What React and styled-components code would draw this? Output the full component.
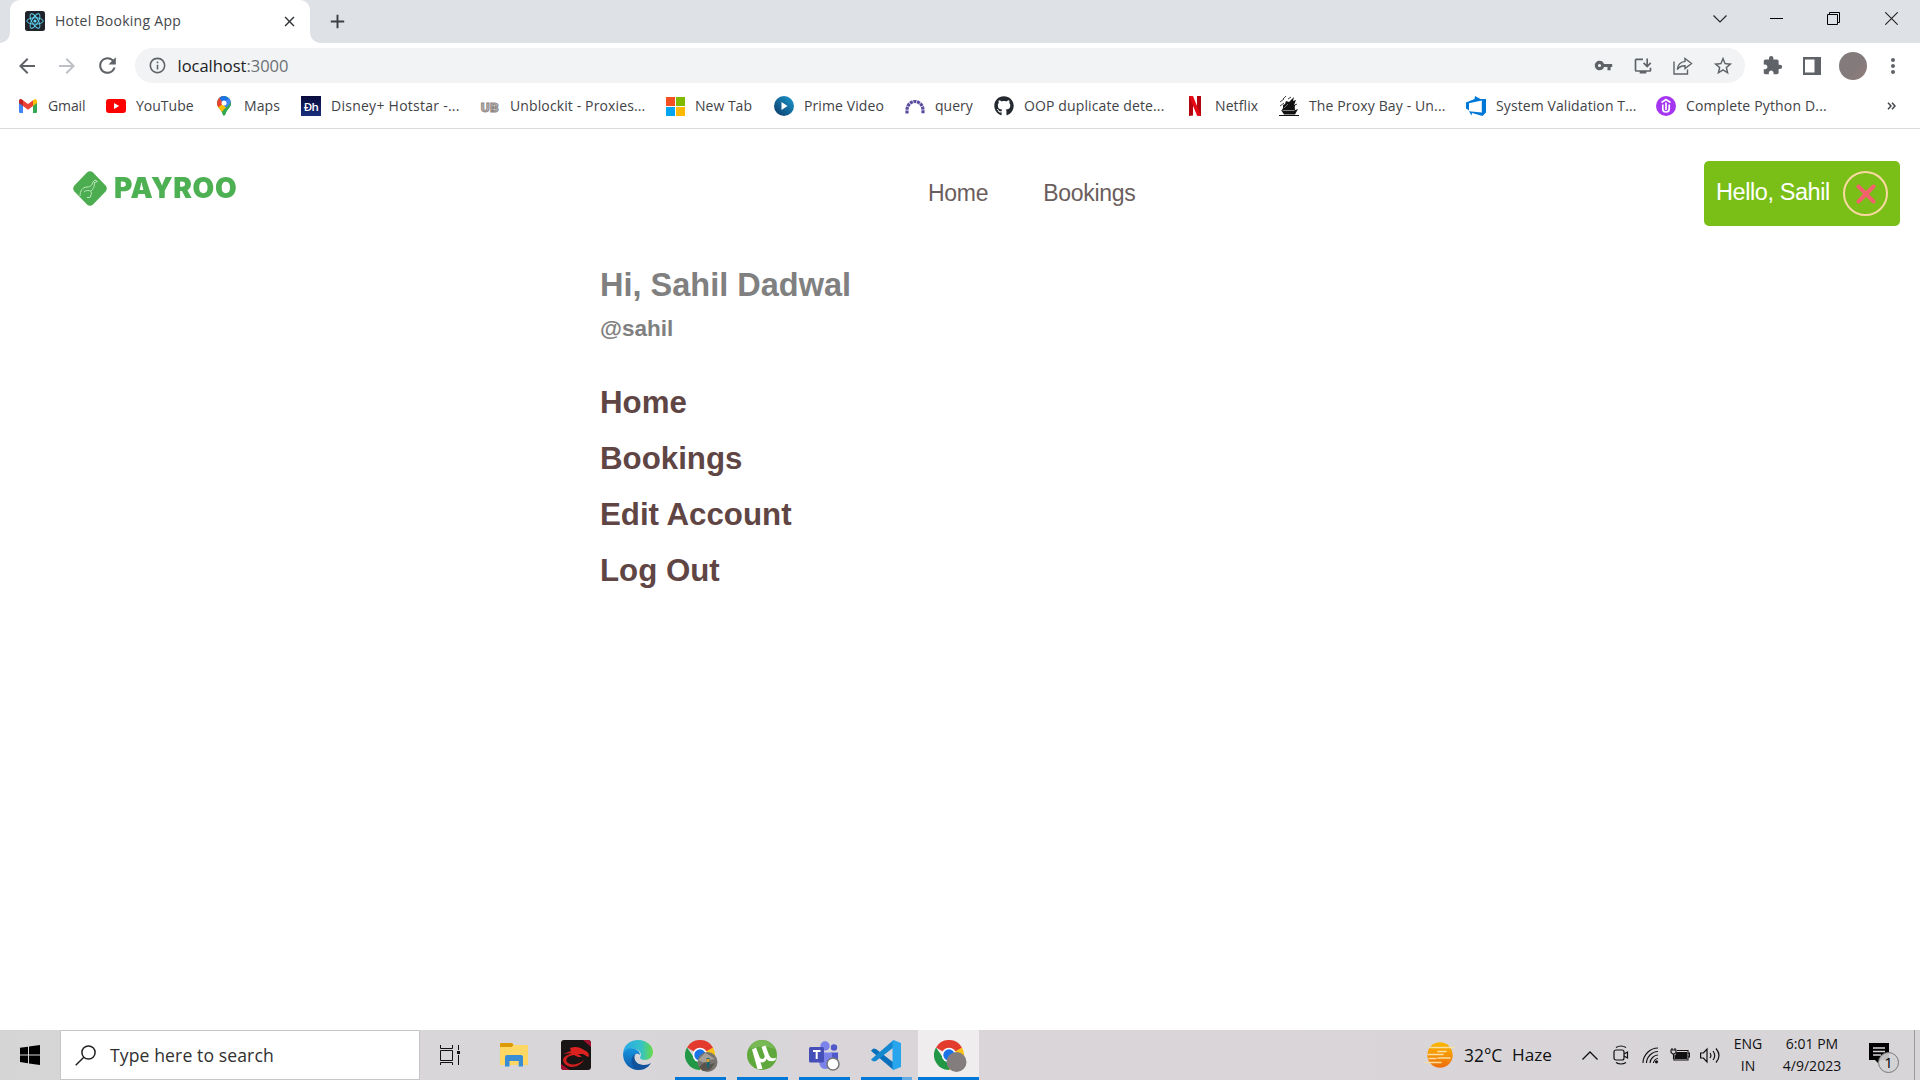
import React from "react";
import styled, { createGlobalStyle } from "styled-components";
import {
  MdArrowBack, MdArrowForward, MdRefresh, MdInfoOutline, MdVpnKey, MdInstallDesktop,
  MdStarBorder, MdExtension, MdMoreVert, MdClose, MdAdd,
} from "react-icons/md";
import { FaGithub } from "react-icons/fa";

const GlobalStyle = createGlobalStyle`
  * { box-sizing: border-box; }
  html, body { margin: 0; padding: 0; background: #fff; overflow: hidden; }
  svg { display: block; flex: none; }
  a { text-decoration: none; color: inherit; }
`;

const uiFont = `"Open Sans", "Noto Sans", sans-serif`;

const Screen = styled.div`
  width: 1920px;
  height: 1080px;
  display: flex;
  flex-direction: column;
  font-family: ${uiFont};
`;

/* ---------- browser chrome ---------- */

const TabStrip = styled.header`
  height: 43px;
  flex: none;
  display: flex;
  background: #dee1e6;
`;

const TabFoot = styled.div`
  width: 10px;
  height: 43px;
  background: radial-gradient(circle at ${(p) => (p.$side === "left" ? "0" : "10px")} 0, transparent 9.5px, #fff 10px)
    0 33px / 10px 10px no-repeat;
`;

const Tab = styled.div`
  width: 300px;
  height: 43px;
  padding: 0 12px 1px 15px;
  display: flex;
  align-items: center;
  border-radius: 10px 10px 0 0;
  background: #fff;
`;

const TabTitle = styled.span`
  margin-left: 10px;
  flex: 1;
  color: #45484c;
  font-size: 14px;
  line-height: 20px;
  letter-spacing: 0.28px;
`;

const NewTab = styled.button`
  width: 35px;
  border: 0;
  padding: 0 0 0 6px;
  background: none;
  color: #3c4043;
  display: flex;
  align-items: center;
`;

const WindowControls = styled.div`
  margin-left: auto;
  height: 37px;
  display: flex;
`;

const WindowButton = styled.div`
  width: ${(p) => p.$width || 57}px;
  display: flex;
  align-items: center;
  justify-content: center;
`;

const Toolbar = styled.div`
  height: 43px;
  flex: none;
  padding: 5px 7px 3px 7px;
  display: flex;
  align-items: center;
  background: #fff;
`;

const ToolButton = styled.div`
  width: ${(p) => p.$width || 40}px;
  height: 35px;
  display: flex;
  align-items: center;
  justify-content: center;
  color: ${(p) => (p.$muted ? "#bdc1c6" : "#5f6368")};
`;

const AddressBar = styled.div`
  width: 1610px;
  height: 35px;
  margin-left: 8px;
  margin-right: 7px;
  padding: 0 2px 0 13px;
  border-radius: 18px;
  background: #f1f3f4;
  display: flex;
  align-items: center;
  color: #5f6368;
`;

const Address = styled.span`
  flex: 1;
  margin-left: 10.5px;
  font-size: 16.5px;
  line-height: 24px;
  letter-spacing: -0.02px;
  color: #6c7074;
  b { font-weight: 400; color: #202124; }
`;

const Avatar = styled.div`
  width: 28px;
  height: 28px;
  border-radius: 50%;
  background: linear-gradient(135deg, #827b7c, #837a7b 55%, #937e7b);
`;

const BookmarkBar = styled.nav`
  height: 43px;
  flex: none;
  padding: 0 0 2px 18px;
  display: flex;
  align-items: center;
  border-bottom: 1px solid #d9dbdc;
`;

const Bookmark = styled.a`
  width: ${(p) => p.$width}px;
  height: 30px;
  display: flex;
  align-items: center;
  gap: 10px;
  color: #3f4347;
  font-size: 14px;
  white-space: nowrap;
  letter-spacing: ${(p) => p.$spacing || 0}px;
`;

const BookmarkLabel = styled.span`
  padding-bottom: 2px;
`;

const BookmarkIcon = styled.span`
  width: 20px;
  height: 20px;
  display: flex;
  align-items: center;
  justify-content: center;
`;

/* ---------- page ---------- */

const Page = styled.main`
  flex: 1;
  display: flex;
  flex-direction: column;
  font-family: "Liberation Sans", Arial, sans-serif;
`;

const SiteHeader = styled.header`
  height: 97px;
  padding: 32px 20px 0 73px;
  display: grid;
  grid-template-columns: 855px 1fr 196px;
  align-items: start;
`;

const Brand = styled.div`
  height: 54px;
  display: flex;
  align-items: center;
  gap: 7px;
  filter: blur(0.45px);
`;

const BrandName = styled.span`
  font: 900 28px/34px Inter, sans-serif;
  letter-spacing: 0.6px;
  color: #4db053;
`;

const SiteNav = styled.nav`
  height: 65px;
  display: flex;
  align-items: center;
  gap: 55px;
  font-size: 23px;
  color: #6b5d5d;
`;

const NavLink = styled.a`
  letter-spacing: -0.3px;
`;

const UserButton = styled.button`
  height: 65px;
  border: 0;
  border-radius: 5px;
  padding: 0 12px;
  display: flex;
  align-items: center;
  justify-content: space-between;
  background: #7abf18;
  color: #fff;
  font: 23.5px/27px "Liberation Sans", Arial, sans-serif;
  letter-spacing: -0.42px;
  white-space: nowrap;
`;

const UserName = styled.span`
  padding-bottom: 2px;
`;

const CloseRing = styled.span`
  width: 45px;
  height: 45px;
  border: 2px solid #fbd9a0;
  border-radius: 50%;
  display: flex;
  align-items: center;
  justify-content: center;
`;

const Profile = styled.section`
  padding: 39px 0 0 600px;
`;

const Greeting = styled.h1`
  margin: 0;
  font-size: 32.5px;
  line-height: 40px;
  color: #808080;
`;

const Handle = styled.h2`
  margin: 4px 0 0;
  font-size: 22.5px;
  line-height: 40px;
  color: #808080;
`;

const Menu = styled.ul`
  list-style: none;
  margin: 26px 0 0;
  padding: 0;
`;

const MenuItem = styled.li`
  height: 56px;
  font-size: 31.25px;
  line-height: 56px;
  font-weight: 700;
  color: #5f4544;
`;

/* ---------- taskbar ---------- */

const Taskbar = styled.footer`
  height: 50px;
  flex: none;
  display: flex;
  background: linear-gradient(90deg, #d5d5d6 0, #d8d6d8 420px, #d9d5d9 1000px, #d8d5d9 100%);
`;

const StartButton = styled.div`
  width: 60px;
  display: flex;
  align-items: center;
  justify-content: center;
`;

const SearchBox = styled.div`
  width: 360px;
  padding-left: 14px;
  border: 1px solid #c6c6c8;
  display: flex;
  align-items: center;
  gap: 14px;
  background: #fff;
  color: #303030;
  font-size: 17.6px;
  letter-spacing: 0.1px;
`;

const TaskViewSlot = styled.div`
  width: 63px;
  padding-left: 20px;
  display: flex;
  align-items: center;
`;

const TaskSlot = styled.div`
  width: ${(p) => (p.$active ? 61 : 62)}px;
  margin-left: ${(p) => (p.$active ? 1 : 0)}px;
  padding-top: 3px;
  display: flex;
  flex-direction: column;
  align-items: center;
  justify-content: space-between;
  background: ${(p) => (p.$active ? "#efedee" : "transparent")};
`;

const TaskIcon = styled.span`
  height: 44px;
  padding-left: ${(p) => p.$overhang || 0}px;
  padding-top: ${(p) => p.$overhang || 0}px;
  display: flex;
  align-items: center;
`;

const Underline = styled.span`
  width: ${(p) => (p.$full ? 61 : 51)}px;
  height: 3px;
  margin-left: ${(p) => (p.$full ? 0 : 1)}px;
  background: ${(p) => (p.$split ? "linear-gradient(90deg, #0078d7 41px, #62abe2 41px)" : "#0078d7")};
`;

const Tray = styled.div`
  margin-left: auto;
  display: flex;
  align-items: center;
  color: #111;
`;

const TraySlot = styled.div`
  width: ${(p) => p.$width}px;
  padding-top: ${(p) => p.$drop || 0}px;
  padding-left: ${(p) => p.$inset || 0}px;
  display: flex;
  align-items: center;
  justify-content: ${(p) => (p.$start ? "flex-start" : "center")};
`;

const TrayText = styled.div`
  width: ${(p) => p.$width}px;
  font-size: ${(p) => p.$size || 14}px;
  line-height: 22.5px;
  text-align: ${(p) => p.$align || "center"};
  white-space: nowrap;
`;

const DesktopEdge = styled.div`
  width: 6px;
  height: 50px;
  border-left: 1px solid #9b999c;
`;

/* ---------- icons ---------- */

const ReactBadge = () => (
  <svg width="20" height="20" viewBox="0 0 20 20">
    <rect width="20" height="20" rx="2.5" fill="#20232a" />
    <g fill="none" stroke="#61dafb" strokeWidth=".9">
      <ellipse cx="10" cy="10" rx="8.2" ry="3.2" />
      <ellipse cx="10" cy="10" rx="8.2" ry="3.2" transform="rotate(60 10 10)" />
      <ellipse cx="10" cy="10" rx="8.2" ry="3.2" transform="rotate(120 10 10)" />
    </g>
    <circle cx="10" cy="10" r="1.6" fill="#61dafb" />
  </svg>
);

const GmailIcon = () => (
  <svg width="18" height="14" viewBox="0 0 18 14">
    <path d="M0 3v9.8Q0 14 1.2 14H4V6z" fill="#4285f4" />
    <path d="M18 3v9.8q0 1.2-1.2 1.2H14V6z" fill="#34a853" />
    <path d="M14 1.2V7l4-3V2c0-1.8-1.7-2.2-2.8-1.6z" fill="#fbbc04" />
    <path d="M0 2v2l4 3V1.2L2.8.4C1.7-.3 0 .3 0 2z" fill="#c5221f" />
    <path d="M4 1.2V7l5 3.7L14 7V1.2L9 5z" fill="#ea4335" />
  </svg>
);

const YouTubeIcon = () => (
  <svg width="20" height="14" viewBox="0 0 20 14">
    <rect width="20" height="14" rx="3" fill="#f00" />
    <path d="M8 4v6l5.2-3z" fill="#fff" />
  </svg>
);

const MapsIcon = () => (
  <svg width="14" height="20" viewBox="0 0 14 20">
    <clipPath id="pin"><path d="M7 0a7 7 0 0 1 7 7c0 4-3.400 6-5 9.400-.7 1.500-.9 3.400-2 3.400s-1.300-1.900-2-3.400C3.400 13 0 11 0 7a7 7 0 0 1 7-7z" /></clipPath>
    <g clipPath="url(#pin)">
      <path d="M0 0h14v20H0z" fill="#34a853" />
      <path d="M0 11l6-6 5 4-8 9z" fill="#fbbc04" />
      <path d="M0 0h7L7 7-1 13z" fill="#ea4335" />
      <path d="M2 1L7-1l6 4-6 6z" fill="#1a73e8" />
      <path d="M12 2l3 3v6H8L6 7z" fill="#4285f4" />
      <path d="M14 6v7l-6 6-3-2z" fill="#34a853" />
    </g>
    <circle cx="7" cy="7" r="2.500" fill="#fff" />
  </svg>
);

const HotstarText = styled.span`
  width: 20px;
  height: 20px;
  background: linear-gradient(#080b3b, #1a2f7c);
  color: #fff;
  font: 600 11.5px/21px "Open Sans", sans-serif;
  letter-spacing: -0.7px;
  text-align: center;
`;

const UnblockText = styled.span`
  padding-top: 1px;
  font: 900 13.5px/16px Roboto, sans-serif;
  letter-spacing: 0.3px;
  color: #b8b0ad;
  -webkit-text-stroke: 0.9px #8d8583;
`;

const MicrosoftIcon = () => (
  <svg width="19" height="19" viewBox="0 0 19 19">
    <path d="M0 0h9v9H0z" fill="#f25022" /><path d="M10 0h9v9h-9z" fill="#7fba00" />
    <path d="M0 10h9v9H0z" fill="#00a4ef" /><path d="M10 10h9v9h-9z" fill="#ffb900" />
  </svg>
);

const PrimeIcon = () => (
  <svg width="20" height="20" viewBox="0 0 20 20">
    <defs><linearGradient id="prime" x1="1" y1="0" x2="0" y2="1"><stop stopColor="#1b9ad0" /><stop offset="1" stopColor="#0b3966" /></linearGradient></defs>
    <circle cx="10" cy="10" r="10" fill="url(#prime)" /><path d="M7.500 6v8l6-4z" fill="#fff" />
  </svg>
);

const QueryIcon = () => (
  <svg width="20" height="15" viewBox="0 0 20 15">
    <path d="M2 14.500V11a8 8.500 0 0 1 16 0v3.500" fill="none" stroke="#5b4b9e" strokeWidth="3.200" strokeDasharray="3 .7" />
  </svg>
);

const NetflixIcon = () => (
  <svg width="12" height="20" viewBox="0 0 12 20">
    <path d="M0 0h4v19.500L0 20zM8 0h4v20l-4-.5z" fill="#b1060f" /><path d="M0 0h4l8 20-4-.5z" fill="#e50914" />
  </svg>
);

const ShipIcon = () => (
  <svg width="20" height="20" viewBox="0 0 20 20" fill="#111">
    <path d="M0 19h20v1H0z" /><path d="M2 14l3 .5h10l4-1.500-3 5.500H5z" />
    <path d="M3 14l1-2 0-3 2-1 1-3 3 1 5-5-1 4 3-1-2 5 2-1c-2 2-1 4-1 6z" />
    <path d="M1 6l4-3M1 10l4-3M4 3l3-3M9 3l3-2M16 9l2-1" stroke="#111" strokeWidth=".8" />
    <path d="M5 12l4-4" stroke="#fff" strokeWidth=".4" />
  </svg>
);

const DevOpsIcon = () => (
  <svg width="20" height="20" viewBox="0 0 20 20">
    <path d="M0 6.500L8.500 3 9 0l5.500 3L20 3V16.500L16.500 20 6 17 5.500 19.500 3 15.200 15.800 16.400V4.500L3 7.200v7.200L0 12.400z" fill="#0078d7" />
  </svg>
);

const UdemyIcon = () => (
  <svg width="20" height="20" viewBox="0 0 20 20">
    <circle cx="10" cy="10" r="10" fill="#a435f0" />
    <path d="M5.500 6.500L10 3.500 14.500 6.500M6.800 8.500V13c0 4 6.400 4 6.400 0V8.500M10 6.500V14" fill="none" stroke="#fff" strokeWidth="1.700" />
  </svg>
);

const ShareIcon = () => (
  <svg width="20" height="20" viewBox="0 0 20 20" fill="none" stroke="#5f6368" strokeWidth="1.400">
    <path d="M1 5.500v12.500h13.500v-4.500" /><path d="M12 2.500L18.500 7.500 12 12.500V9.700C8.500 9.700 6 10.600 4.300 13.600 4.700 9.500 7.500 6 12 5.400z" />
  </svg>
);

const SidePanelIcon = () => (
  <svg width="18" height="18" viewBox="0 0 18 18"><path fillRule="evenodd" d="M0 0h18v18H0zM2 2.500v13h9.500v-13z" fill="#5f6368" /></svg>
);

const KangarooLogo = () => (
  <svg width="34" height="35" viewBox="0 0 34 35">
    <path d="M14 1.400q3-2.400 6 0L32.600 14.500q2.400 3 0 6L20 33.500q-3 2.400-6 0L1.400 20.500q-2.400-3 0-6z" fill="#4bad50" />
    <path d="M7 25c0-5 2.500-9 7-9 4 0 5-2 6-5l2-2 2.500 1.500-3 1c0 4-1 6.500-3.500 8.500M11 21c2-2 5-2 7-.5l.5 2-1.500 4h-3" fill="none" stroke="#bfe6be" strokeWidth="1" />
  </svg>
);

const WindowsIcon = () => (
  <svg width="20" height="20" viewBox="0 0 20 20"><path d="M0 2.800l8-1.100v7.700H0zM9 1.500L20 0v9.400H9zM0 10.400h8v7.800l-8-1.100zM9 10.400h11V20L9 18.400z" fill="#000" /></svg>
);

const SearchIcon = () => (
  <svg width="21" height="21" viewBox="0 0 21 21" fill="none" stroke="#222" strokeWidth="1.500"><circle cx="13.500" cy="7.500" r="6.600" /><path d="M8.800 12.200L.7 20.300" /></svg>
);

const TaskViewIcon = () => (
  <svg width="20" height="20" viewBox="0 0 20 20" fill="none" stroke="#111" strokeWidth="1">
    <path d="M.5 0v3.500h12V0M.5 5.500h12v10H.5zM.5 20v-2.500h12V20M18.500 0v5M18.500 10v10" /><path d="M17 6h3v3h-3z" fill="#111" stroke="none" />
  </svg>
);

const ExplorerIcon = () => (
  <svg width="28" height="24" viewBox="0 0 28 24">
    <path d="M0 0h12l2 2h14v20H0z" fill="#ffd45f" /><path d="M0 1q0-1 1-1h11l1.500 2L12 4H0z" fill="#dc9a08" />
    <path d="M1 4h11l2-2h13.500v19H1z" fill="#ffd765" /><path d="M5 23.500V14q0-2 2-2h14q2 0 2 2v9.500h-4.300V18H9.500v5.500z" fill="#388dd5" />
  </svg>
);

const DragonIcon = () => (
  <svg width="30" height="30" viewBox="0 0 30 30">
    <rect width="30" height="30" rx="3" fill="#191515" /><path d="M22 0h5q3 0 3 4v3zM0 24v3q0 3 3 3h6z" fill="#a4102d" />
    <path d="M9 8c5-2 10-1 14 2 3 1 5 3 5 6l-1 1-5-3-5 0 4 3-4 0-4-2-8 1 6-3-9 1 8-3z" fill="#dc2220" />
    <path d="M3 23C0 18 5 14 12 15c-5 1-8 4-6 7 3 4 11 3 17-2-4 7-15 10-20 3z" fill="#cf1f1e" />
  </svg>
);

const EdgeIcon = () => (
  <svg width="30" height="30" viewBox="0 0 30 30">
    <defs>
      <linearGradient id="eg1"><stop stopColor="#2aa8e7" /><stop offset=".6" stopColor="#35c1c9" /><stop offset="1" stopColor="#68dc45" /></linearGradient>
      <linearGradient id="eg2" x1="0" y1="0" x2="0" y2="1"><stop stopColor="#1695df" /><stop offset="1" stopColor="#0d57a7" /></linearGradient>
    </defs>
    <path d="M0 13C1 5 7 0 15 0c9 0 15 6 15 12 0 5-4 8-8 8-3 0-5-1-5-2.500C19 15 18 10 12 9 7 8 2 9 0 13z" fill="url(#eg1)" />
    <path d="M0 14C1 9 7 7 12 9c3 1 5 3 5 6-3-3-7 0-7 5 0 4 3 8 7 9.800C8 31 0 24 0 14z" fill="url(#eg2)" />
    <path d="M12 14c-2 6 2 11 9 11 3 0 5-1 7-2-3 5-8 7.500-13 6.800C8 27 6 19 12 14z" fill="#10529b" />
  </svg>
);

const ChromeIcon = ({ children }) => (
  <svg width="33" height="33" viewBox="0 0 33 33">
    <path d="M15 15L2 7.500A15 15 0 0 1 28 7.500z" fill="#e33b2e" />
    <path d="M15 15h-.5L28 7.500A15 15 0 0 1 15 30z" fill="#fbc116" />
    <path d="M2 7.500L10 19l5 3 2 1-2 7A15 15 0 0 1 2 7.500z" fill="#229745" />
    <path d="M15 7.500h13l-13 7z" fill="#e33b2e" />
    <circle cx="15" cy="15" r="7.300" fill="#fff" /><circle cx="15" cy="15" r="5.700" fill="#1a73e8" />{children}
  </svg>
);

const PhotoBadge = () => (
  <g><circle cx="22.500" cy="22" r="10" fill="#77736e" /><path d="M13 20l7-7 4 2 6 4-6 1-4 3z" fill="#a5a09a" /><path d="M14 27l6-5 3 3 7-2-5 7-7 1z" fill="#59534e" /><path d="M21.500 18h3l.5 5-1 5h-2z" fill="#1f6470" /><path d="M21.500 19h3v3h-3z" fill="#e0a32b" /></g>
);

const TorrentIcon = () => (
  <svg width="30" height="30" viewBox="0 0 30 30">
    <circle cx="15" cy="15" r="15" fill="#5fa83b" /><path d="M2 9a14 14 0 0 1 26 0q-13-5-26 0z" fill="#78b956" />
    <path d="M5 9.500l4-2 3.500 9.500c1.500 3.500 6 2 5-1.500L14.500 7l4-1.500L22 15c1 2.500 3 4 6 3l1-.5-.5 2.500c-3 2-7 1.500-9-1-1 3-4 4-6 3l2 7h-5z" fill="#fff" />
  </svg>
);

const TeamsIcon = () => (
  <svg width="31" height="31" viewBox="0 0 31 31">
    <circle cx="16" cy="6" r="4.700" fill="#7b83eb" /><circle cx="25" cy="7.500" r="3.200" fill="#5059c9" />
    <path d="M22 12.500h7v9q-1 5-7 4z" fill="#5059c9" /><path d="M10 12.500h13V23q-2 6-7 6t-6-7z" fill="#7b83eb" />
    <rect y="7" width="15" height="15.500" rx="1.500" fill="#464eb8" /><path d="M4 11h7.500M7.700 11v8" stroke="#fff" strokeWidth="2" />
    <circle cx="24" cy="24" r="6" fill="#fff" stroke="#777" strokeWidth="1.500" />
  </svg>
);

const CodeIcon = () => (
  <svg width="30" height="30" viewBox="0 0 30 30">
    <path d="M0 10.500l2.500-2L5 9l17.500 13.500V30L1 11.800z" fill="#0a70bb" /><path d="M0 19.500L22.500 0v7.500L5 21l-2.500.5L.5 20z" fill="#1688d0" />
    <path d="M22.500 0L30 3v24l-7.500 3-1-1V1z" fill="#29a5ee" />
  </svg>
);

const HazeIcon = () => (
  <svg width="30" height="27" viewBox="0 0 30 27">
    <defs><linearGradient id="sun" x1="0" y1="0" x2="0" y2="1"><stop stopColor="#fbb900" /><stop offset="1" stopColor="#ef6c0b" /></linearGradient></defs>
    <circle cx="15" cy="13" r="12.700" fill="url(#sun)" />
    <path d="M5 5.500h24M13 9.500h8M3 12.500h15M13 16h12M1 20.500h15M4 16.500h7" stroke="#f8dfa5" strokeWidth="1.600" strokeLinecap="round" />
  </svg>
);

const MeetIcon = () => (
  <svg width="16" height="20" viewBox="0 0 16 20" fill="none" stroke="#111" strokeWidth="1.200"><rect x="1" y="5" width="10" height="10" rx="2" /><path d="M11 9l3.500-2v6L11 11M3 2.500q5-3 10 0M3 17.500q5 3 10 0" /></svg>
);

const WifiIcon = () => (
  <svg width="17" height="17" viewBox="0 0 17 17" fill="none" stroke="#111" strokeWidth="1.100"><path d="M1 16C1 8 8 1 16 1M4.500 16C4.500 10 10 4.500 16 4.500M8 16c0-4 4-8 8-8M11.500 16c0-2 2-4.500 4.500-4.500" /><circle cx="14.500" cy="14.800" r="1.600" fill="#111" stroke="none" /></svg>
);

const BatteryIcon = () => (
  <svg width="20" height="14" viewBox="0 0 20 14" fill="none" stroke="#111" strokeWidth="1.100"><path d="M7 2.500h11V12H4V7M18 5h1.500v4H18" /><path d="M7 4.500h9.500v6H5.500V8z" fill="#111" /><path d="M1 2h5v2.500L3.500 6.500 1 4.500zM2 0v2M5 0v2M3.500 6v5" /></svg>
);

const VolumeIcon = () => (
  <svg width="21" height="17" viewBox="0 0 21 17" fill="none" stroke="#111" strokeWidth="1.200"><path d="M.6 6h2.800L7 2v13l-3.600-4H.6zM10 6q1.800 2.500 0 5M13 4q3.500 4.500 0 9M16 1.500q6 7 0 14" /></svg>
);

const NoticeIcon = () => (
  <svg width="32" height="32" viewBox="0 0 32 32">
    <path d="M1 2h20v17H13l-3 3-3-3H1z" fill="#000" /><path d="M5 7h12M5 10.500h12M5 14h8" stroke="#d8d5d9" strokeWidth="1.300" />
    <circle cx="20.500" cy="21.500" r="10" fill="#d3d1d4" fillOpacity=".9" stroke="#777" />
    <text x="20.500" y="27" textAnchor="middle" fontFamily="Open Sans, sans-serif" fontSize="15" fill="#000">1</text>
  </svg>
);

const bookmarks = [
  { label: "Gmail", icon: <GmailIcon />, width: 88, spacing: -0.1 },
  { label: "YouTube", icon: <YouTubeIcon />, width: 108 },
  { label: "Maps", icon: <MapsIcon />, width: 87, spacing: 0.1 },
  { label: "Disney+ Hotstar -...", icon: <HotstarText>Ðh</HotstarText>, width: 179, spacing: 0.26 },
  { label: "Unblockit - Proxies...", icon: <UnblockText>UB</UnblockText>, width: 185, spacing: 0.12 },
  { label: "New Tab", icon: <MicrosoftIcon />, width: 109 },
  { label: "Prime Video", icon: <PrimeIcon />, width: 131, spacing: 0.1 },
  { label: "query", icon: <QueryIcon />, width: 89 },
  { label: "OOP duplicate dete...", icon: <FaGithub size={20} color="#24292f" />, width: 191, spacing: 0.12 },
  { label: "Netflix", icon: <NetflixIcon />, width: 94, spacing: 0.1 },
  { label: "The Proxy Bay - Un...", icon: <ShipIcon />, width: 187, spacing: 0.13 },
  { label: "System Validation T...", icon: <DevOpsIcon />, width: 190, spacing: 0.1 },
  { label: "Complete Python D...", icon: <UdemyIcon />, width: 215, spacing: 0.17 },
];

const tasks = [
  { icon: <ExplorerIcon /> },
  { icon: <DragonIcon /> },
  { icon: <EdgeIcon /> },
  { icon: <ChromeIcon><PhotoBadge /></ChromeIcon>, running: true, overhang: 3 },
  { icon: <TorrentIcon />, running: true },
  { icon: <TeamsIcon />, running: true, overhang: 1 },
  { icon: <CodeIcon />, running: true, split: true },
  { icon: <ChromeIcon><circle cx="22.500" cy="22" r="10" fill="#837d7d" /></ChromeIcon>, running: true, active: true, overhang: 3 },
];

export default function App() {
  return (
    <Screen>
      <GlobalStyle />
      <TabStrip>
        <TabFoot $side="left" />
        <Tab>
          <ReactBadge />
          <TabTitle>Hotel Booking App</TabTitle>
          <MdClose size={17} color="#303336" />
        </Tab>
        <TabFoot $side="right" />
        <NewTab><MdAdd size={23} /></NewTab>
        <WindowControls>
          <WindowButton><svg width="14" height="8" viewBox="0 0 14 8"><path d="M.5.5L7 7 13.500.5" fill="none" stroke="#222" strokeWidth="1.100" /></svg></WindowButton>
          <WindowButton><svg width="13" height="1"><path d="M0 .5h13" stroke="#000" /></svg></WindowButton>
          <WindowButton><svg width="13" height="13" viewBox="0 0 13 13"><path d="M.5 2.500h10v10H.5zM2.500 2.500v-2h10v10h-2" fill="none" stroke="#000" /></svg></WindowButton>
          <WindowButton $width={58}><svg width="13" height="13" viewBox="0 0 13 13"><path d="M.3.3l12.400 12.400M12.700.3L.3 12.700" stroke="#222" strokeWidth="1.100" /></svg></WindowButton>
        </WindowControls>
      </TabStrip>

      <Toolbar>
        <ToolButton><MdArrowBack size={24} /></ToolButton>
        <ToolButton $muted><MdArrowForward size={24} /></ToolButton>
        <ToolButton><MdRefresh size={25} /></ToolButton>
        <AddressBar>
          <MdInfoOutline size={19} />
          <Address><b>localhost</b>:3000</Address>
          <ToolButton $width={39}><MdVpnKey size={19} /></ToolButton>
          <ToolButton><MdInstallDesktop size={20} /></ToolButton>
          <ToolButton><ShareIcon /></ToolButton>
          <ToolButton><MdStarBorder size={22} /></ToolButton>
        </AddressBar>
        <ToolButton><MdExtension size={21} /></ToolButton>
        <ToolButton><SidePanelIcon /></ToolButton>
        <ToolButton $width={41}><Avatar /></ToolButton>
        <ToolButton $width={39}><MdMoreVert size={24} /></ToolButton>
      </Toolbar>

      <BookmarkBar>
        {bookmarks.map((b) => (
          <Bookmark key={b.label} href="#" $width={b.width} $spacing={b.spacing}>
            <BookmarkIcon>{b.icon}</BookmarkIcon>
            <BookmarkLabel>{b.label}</BookmarkLabel>
          </Bookmark>
        ))}
        <ToolButton>
          <svg width="9" height="8" viewBox="0 0 9 8"><path d="M1 .7L4 4 1 7.300M5 .7L8 4 5 7.300" fill="none" stroke="#44474b" strokeWidth="1.500" /></svg>
        </ToolButton>
      </BookmarkBar>

      <Page>
        <SiteHeader>
          <Brand><KangarooLogo /><BrandName>PAYROO</BrandName></Brand>
          <SiteNav><NavLink href="#">Home</NavLink><NavLink href="#">Bookings</NavLink></SiteNav>
          <UserButton>
            <UserName>Hello, Sahil</UserName>
            <CloseRing>
              <svg width="20" height="20" viewBox="0 0 20 20"><path d="M2.500 2.500l15 15M17.500 2.500l-15 15" stroke="#f4606c" strokeWidth="4" strokeLinecap="round" /></svg>
            </CloseRing>
          </UserButton>
        </SiteHeader>
        <Profile>
          <Greeting>Hi, Sahil Dadwal</Greeting>
          <Handle>@sahil</Handle>
          <Menu>
            {["Home", "Bookings", "Edit Account", "Log Out"].map((item) => <MenuItem key={item}>{item}</MenuItem>)}
          </Menu>
        </Profile>
      </Page>

      <Taskbar>
        <StartButton><WindowsIcon /></StartButton>
        <SearchBox><SearchIcon />Type here to search</SearchBox>
        <TaskViewSlot><TaskViewIcon /></TaskViewSlot>
        {tasks.map((t, i) => (
          <TaskSlot key={i} $active={t.active}>
            <TaskIcon $overhang={t.overhang}>{t.icon}</TaskIcon>
            {t.running && <Underline $full={t.active} $split={t.split} />}
          </TaskSlot>
        ))}
        <Tray>
          <TraySlot $width={39} $start><HazeIcon /></TraySlot>
          <TrayText $width={48} $size={17.400} $align="left">32°C</TrayText>
          <TrayText $width={57} $size={17.200} $align="left">Haze</TrayText>
          <TraySlot $width={42}><svg width="16" height="9" viewBox="0 0 16 9"><path d="M.5 8.500L8 1l7.500 7.500" fill="none" stroke="#111" strokeWidth="1.300" /></svg></TraySlot>
          <TraySlot $width={20}><MeetIcon /></TraySlot>
          <TraySlot $width={39}><WifiIcon /></TraySlot>
          <TraySlot $width={20}><BatteryIcon /></TraySlot>
          <TraySlot $width={40}><VolumeIcon /></TraySlot>
          <TrayText $width={36}>ENG<br />IN</TrayText>
          <TrayText $width={92}>6:01 PM<br />4/9/2023</TrayText>
          <TraySlot $width={56} $drop={4} $inset={10} $start><NoticeIcon /></TraySlot>
          <DesktopEdge />
        </Tray>
      </Taskbar>
    </Screen>
  );
}
